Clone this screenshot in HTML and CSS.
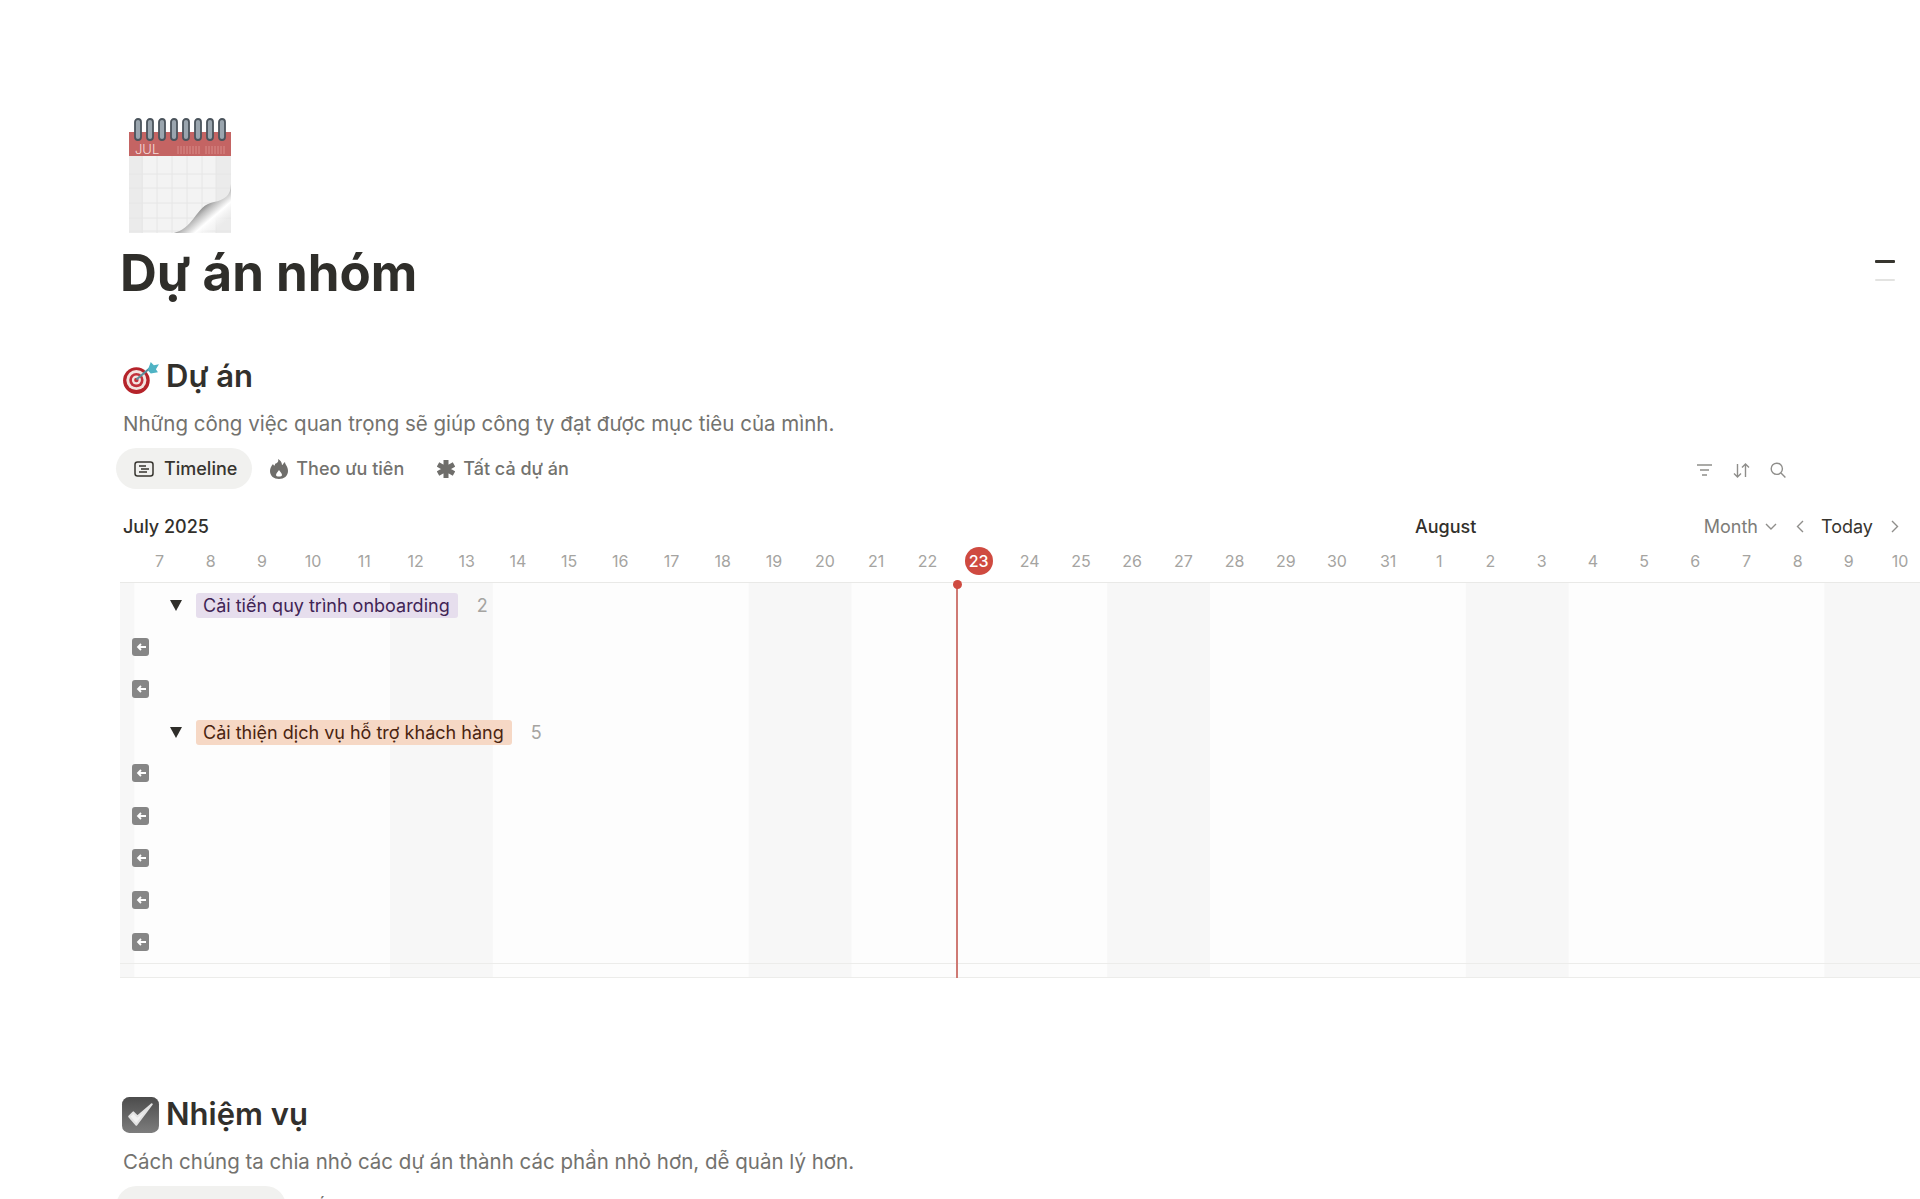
FILE: index.html
```html
<!DOCTYPE html>
<html lang="vi">
<head>
  <meta charset="UTF-8">
  <title>Dự án nhóm</title>
  <link rel="stylesheet" href="styles.css">
</head>
<body>
  <div class="page">
    <div class="page-icon">
      <svg width="104" height="117" viewBox="0 0 104 117">
        <defs>
          <linearGradient id="curl" x1="0" y1="0" x2="1" y2="1">
            <stop offset="0.3" stop-color="#f8f8f8"/>
            <stop offset="0.42" stop-color="#5f5f5f"/>
            <stop offset="0.55" stop-color="#bdbdbd"/>
            <stop offset="0.68" stop-color="#ffffff"/>
            <stop offset="0.85" stop-color="#f1f1f1" stop-opacity="0"/>
          </linearGradient>
        </defs>
        <rect x="1" y="38" width="102" height="77" fill="#f3f3f3"/>
        <rect x="1" y="38" width="14" height="77" fill="#ebebeb"/>
        <rect x="88" y="38" width="15" height="77" fill="#ebebeb"/>
        <path d="M14 38v77M29 38v77M44 38v77M59 38v77M74 38v77M88 38v77M1 56h102M1 70h102M1 85h102M1 100h102M1 113h102" stroke="#e6e6e6" stroke-width="1"/>
        <rect x="1" y="14" width="102" height="24" fill="#c46463"/>
        <text x="7" y="36" class="cal-month">JUL</text>
        <path d="M50 28v8M53 28v8M56 28v8M59 28v8M62 28v8M65 28v8M68 28v8M71 28v8M78 28v8M81 28v8M84 28v8M87 28v8M90 28v8M93 28v8M96 28v8" stroke="#d98b89" stroke-width="1"/>
        <g fill="#9aa5ae" stroke="#4b545c" stroke-width="1.8">
          <rect x="7" y="1" width="6" height="21" rx="3"/><rect x="19" y="1" width="6" height="21" rx="3"/><rect x="31" y="1" width="6" height="21" rx="3"/><rect x="43" y="1" width="6" height="21" rx="3"/><rect x="55" y="1" width="6" height="21" rx="3"/><rect x="67" y="1" width="6" height="21" rx="3"/><rect x="79" y="1" width="6" height="21" rx="3"/><rect x="91" y="1" width="6" height="21" rx="3"/>
        </g>
        <path d="M103 66C103 78 96 82 86 84C76 86 72 92 66 100C60 108 54 113 46 115H103Z" fill="url(#curl)"/>
      </svg>
    </div>
    <h1 class="page-title">Dự án nhóm</h1>
    <div class="toc"><span class="toc-on"></span><span class="toc-off"></span></div>

    <section class="block">
      <h2 class="block-title">
        <svg class="block-icon" width="39" height="35" viewBox="0 0 38 34">
          <circle cx="15" cy="20" r="13" fill="#b5232a"/>
          <circle cx="15" cy="19.5" r="9.8" fill="#f3e3df"/>
          <circle cx="15" cy="19.5" r="7" fill="#c2303a"/>
          <circle cx="15" cy="19.5" r="4.4" fill="#f3e3df"/>
          <circle cx="15" cy="19.5" r="2.2" fill="#c2303a"/>
          <path d="M15 19L28 8" stroke="#5c8f9c" stroke-width="2"/>
          <path d="M26 10L29 2L32 5L37 4L34 9L36 12L29 13Z" fill="#4fb3c4"/>
        </svg>
        Dự án
      </h2>
      <p class="block-desc">Những công việc quan trọng sẽ giúp công ty đạt được mục tiêu của mình.</p>
      <div class="tabs">
        <div class="tab tab-active">
          <svg width="20" height="16" viewBox="0 0 20 16" fill="none" stroke="#37352f" stroke-width="1.5">
            <rect x="1" y="1" width="18" height="14" rx="2.5"/>
            <path d="M5 5h7M7 8h8M5 11h8"/>
          </svg>
          Timeline
        </div>
        <div class="tab tab-tight">
          <svg width="18" height="20" viewBox="0 0 18 20">
            <path d="M8 0C9 3 7 4 5 5C5 7 4 7 3 5C1 7 0 10 0 12C0 17 4 20 9 20S18 17 18 12C18 7 15 6 15 3C13 4 13 6 12 6C12 3 10 1 8 0Z" fill="#6f6e6b"/>
            <path d="M9 11C10 13 12 14 12 16C12 18 6 18 6 16C6 14 8 13 9 11Z" fill="#fff"/>
          </svg>
          Theo ưu tiên
        </div>
        <div class="tab tab-tight">
          <svg width="18" height="18" viewBox="0 0 18 18">
            <path d="M9 9V0M9 9L17 4.5M9 9L17 13.5M9 9V18M9 9L1 13.5M9 9L1 4.5" stroke="#6f6e6b" stroke-width="5"/>
          </svg>
          Tất cả dự án
        </div>
        <div class="tools">
          <svg width="17" height="14" viewBox="0 0 17 14" fill="none" stroke="#8f8e8b" stroke-width="1.4"><path d="M1 2h15M4 7h9M6 12h5"/></svg>
          <svg width="17" height="15" viewBox="0 0 17 15" fill="none" stroke="#8f8e8b" stroke-width="1.4"><path d="M4.5 1v13M1 10.5l3.5 3.5L8 10.5M12.5 14V1M9 4.5L12.5 1L16 4.5"/></svg>
          <svg width="16" height="16" viewBox="0 0 16 16" fill="none" stroke="#8f8e8b" stroke-width="1.4"><circle cx="6.8" cy="6.8" r="5.6"/><path d="M11 11l4.4 4.4"/></svg>
        </div>
      </div>

      <div class="month-bar">
        <span class="month month-first">July 2025</span>
        <span class="month">August</span>
        <div class="month-tools">
          <span class="range">Month</span>
          <svg class="range-arrow" width="12" height="7" viewBox="0 0 12 7" fill="none" stroke="#8f8e8b" stroke-width="1.4"><path d="M1 1l5 5 5-5"/></svg>
          <svg class="nav-prev" width="8" height="13" viewBox="0 0 8 13" fill="none" stroke="#8f8e8b" stroke-width="1.4"><path d="M7 1L1.5 6.5L7 12"/></svg>
          <span class="today-btn">Today</span>
          <svg class="nav-next" width="8" height="13" viewBox="0 0 8 13" fill="none" stroke="#8f8e8b" stroke-width="1.4"><path d="M1 1l5.5 5.5L1 12"/></svg>
        </div>
      </div>
      <div class="days">
        <span>7</span><span>8</span><span>9</span><span>10</span><span>11</span><span>12</span><span>13</span><span>14</span><span>15</span><span>16</span><span>17</span><span>18</span><span>19</span><span>20</span><span>21</span><span>22</span><span class="today">23</span><span>24</span><span>25</span><span>26</span><span>27</span><span>28</span><span>29</span><span>30</span><span>31</span><span>1</span><span>2</span><span>3</span><span>4</span><span>5</span><span>6</span><span>7</span><span>8</span><span>9</span><span>10</span>
      </div>
      <div class="timeline">
        <div class="row group group-first">
          <span class="caret"></span>
          <span class="tag tag-purple">Cải tiến quy trình onboarding</span>
          <span class="count">2</span>
        </div>
        <div class="row"><span class="back"><svg width="10" height="8" viewBox="0 0 10 8" fill="none" stroke="#fff" stroke-width="1.8"><path d="M10 4H2M5 1L2 4l3 3"/></svg></span></div>
        <div class="row"><span class="back"><svg width="10" height="8" viewBox="0 0 10 8" fill="none" stroke="#fff" stroke-width="1.8"><path d="M10 4H2M5 1L2 4l3 3"/></svg></span></div>
        <div class="row group">
          <span class="caret"></span>
          <span class="tag tag-orange">Cải thiện dịch vụ hỗ trợ khách hàng</span>
          <span class="count">5</span>
        </div>
        <div class="row"><span class="back"><svg width="10" height="8" viewBox="0 0 10 8" fill="none" stroke="#fff" stroke-width="1.8"><path d="M10 4H2M5 1L2 4l3 3"/></svg></span></div>
        <div class="row"><span class="back"><svg width="10" height="8" viewBox="0 0 10 8" fill="none" stroke="#fff" stroke-width="1.8"><path d="M10 4H2M5 1L2 4l3 3"/></svg></span></div>
        <div class="row"><span class="back"><svg width="10" height="8" viewBox="0 0 10 8" fill="none" stroke="#fff" stroke-width="1.8"><path d="M10 4H2M5 1L2 4l3 3"/></svg></span></div>
        <div class="row"><span class="back"><svg width="10" height="8" viewBox="0 0 10 8" fill="none" stroke="#fff" stroke-width="1.8"><path d="M10 4H2M5 1L2 4l3 3"/></svg></span></div>
        <div class="row"><span class="back"><svg width="10" height="8" viewBox="0 0 10 8" fill="none" stroke="#fff" stroke-width="1.8"><path d="M10 4H2M5 1L2 4l3 3"/></svg></span></div>
        <div class="timeline-foot"></div>
        <div class="now-line"></div>
        <div class="now-dot"></div>
      </div>
    </section>

    <section class="block block-tasks">
      <h2 class="block-title">
        <svg class="block-icon" width="39" height="37" viewBox="0 0 38 36">
          <defs>
            <linearGradient id="box" x1="0" y1="0" x2="0" y2="1">
              <stop offset="0" stop-color="#4c4c4c"/>
              <stop offset="1" stop-color="#7d7d7d"/>
            </linearGradient>
          </defs>
          <rect x="1" y="0" width="36" height="35" rx="7" fill="url(#box)"/>
          <path d="M8 19L15 27L30 7L16 19L12 15Z" fill="#f1f1f1" stroke="#e2e2e2" stroke-width="2" stroke-linejoin="round"/>
        </svg>
        Nhiệm vụ
      </h2>
      <p class="block-desc">Cách chúng ta chia nhỏ các dự án thành các phần nhỏ hơn, dễ quản lý hơn.</p>
      <div class="tabs">
        <div class="tab tab-active tab-wide">Cho mọi người</div>
        <div class="tab">Tất cả</div>
      </div>
    </section>
  </div>
</body>
</html>
```

FILE: styles.css
```css
html, body {
  margin: 0;
  height: 1199px;
  overflow: hidden;
  background: #fff;
}
body {
  font-family: Inter, "Noto Sans", sans-serif;
  color: #32302c;
}
.page {
  position: relative;
  padding-left: 120px;
}
.page-icon {
  height: 115.5px;
  padding: 117.5px 0 0 8px;
}
.cal-month {
  font-size: 13px;
  font-weight: 300;
  fill: #f7dcda;
}
.page-title {
  margin: 10px 0 0;
  height: 60px;
  font-size: 51px;
  line-height: 60px;
  font-weight: 700;
  color: #2f2e2a;
}
.toc {
  position: absolute;
  top: 260px;
  right: 25px;
  width: 20px;
}
.toc span {
  display: block;
  border-radius: 1px;
}
.toc-on {
  height: 3px;
  background: #37352f;
  margin-bottom: 16px;
}
.toc-off {
  height: 2px;
  background: #e3e3e1;
}
.block {
  margin-top: 53px;
}
.block-title {
  display: flex;
  align-items: center;
  gap: 6px;
  margin: 0;
  height: 40px;
  font-size: 31px;
  line-height: 40px;
  font-weight: 600;
  color: #32302c;
}
.block-icon {
  margin: 3px 0 0 1px;
}
.block-desc {
  margin: 14px 0 0;
  padding-left: 3px;
  height: 28px;
  font-size: 20.5px;
  line-height: 28px;
  color: #73726e;
}
.tabs {
  display: flex;
  align-items: center;
  gap: 2px;
  margin: 10px 0 0 -4px;
  height: 41px;
}
.tab {
  display: flex;
  align-items: center;
  gap: 9px;
  height: 41px;
  padding: 0 16px;
  border-radius: 21px;
  font-size: 18px;
  font-weight: 500;
  color: #73726e;
  white-space: nowrap;
}
.tab-tight {
  gap: 8px;
  padding-right: 15px;
}
.tab-active {
  gap: 10px;
  padding: 0 15px 0 18px;
  background: #f1f1ef;
  color: #37352f;
}
.tab-wide {
  width: 137px;
}
.tools {
  display: flex;
  align-items: center;
  gap: 20px;
  margin-left: auto;
  padding: 3px 134px 0 0;
}
.month-bar {
  display: flex;
  align-items: center;
  height: 32px;
  margin-top: 21px;
}
.month {
  font-size: 18px;
  font-weight: 500;
  color: #32302c;
}
.month-first {
  width: 1295px;
  padding-left: 3px;
  box-sizing: border-box;
}
.month-tools {
  display: flex;
  align-items: center;
  margin-left: auto;
  padding-right: 21px;
  font-size: 18px;
}
.range {
  color: #7d7c78;
}
.range-arrow {
  margin-left: 7px;
}
.nav-prev {
  margin-left: 19px;
}
.today-btn {
  margin: 0 18px 0 17px;
  color: #37352f;
}
.days {
  display: flex;
  align-items: center;
  height: 36px;
  padding: 1px 0 3px 14px;
  border-bottom: 1px solid #e9e9e7;
}
.days span {
  flex: 0 0 51.2px;
  display: flex;
  align-items: center;
  justify-content: center;
  height: 28px;
  font-size: 16px;
  color: #a5a4a1;
}
.days .today {
  flex-basis: 28px;
  width: 28px;
  margin: 0 11.6px;
  border-radius: 50%;
  background: #cf4a40;
  color: #fff;
  font-weight: 500;
}
.timeline {
  position: relative;
  padding-top: 1px;
  background-color: #fdfdfd;
  background-image: linear-gradient(to right, #f7f7f7 102.4px, transparent 102.4px);
  background-size: 358.6px 100%;
  background-position: 270px 0;
}
.row {
  display: flex;
  align-items: center;
  height: 42.1px;
  padding-left: 12px;
  box-sizing: border-box;
}
.group {
  padding: 2px 0 0 50px;
  font-size: 18px;
}
.group-first {
  padding-top: 0;
}
.caret {
  width: 0;
  height: 0;
  border-left: 6px solid transparent;
  border-right: 6px solid transparent;
  border-top: 11px solid #2f2e2a;
}
.tag {
  margin-left: 14px;
  padding: 0 8px 0 7px;
  height: 25px;
  line-height: 25px;
  border-radius: 3px;
  white-space: nowrap;
}
.tag-purple {
  background: #e6deed;
  color: #412454;
}
.tag-orange {
  background: #f6d8c5;
  color: #4a2410;
}
.count {
  margin-left: 19px;
  color: #a5a4a1;
}
.back {
  display: flex;
  align-items: center;
  justify-content: center;
  width: 17px;
  height: 18px;
  border-radius: 3px;
  background: #868686;
}
.timeline-foot {
  height: 15px;
  border-top: 1px solid #ececea;
  border-bottom: 1px solid #ececea;
  box-sizing: border-box;
}
.now-line {
  position: absolute;
  top: 0;
  bottom: 0;
  left: 836px;
  width: 2px;
  background: #cf7a74;
}
.now-dot {
  position: absolute;
  top: -3px;
  left: 833px;
  width: 9px;
  height: 9px;
  border-radius: 50%;
  background: #cf4a40;
}
.block-tasks {
  margin-top: 116px;
}
```
